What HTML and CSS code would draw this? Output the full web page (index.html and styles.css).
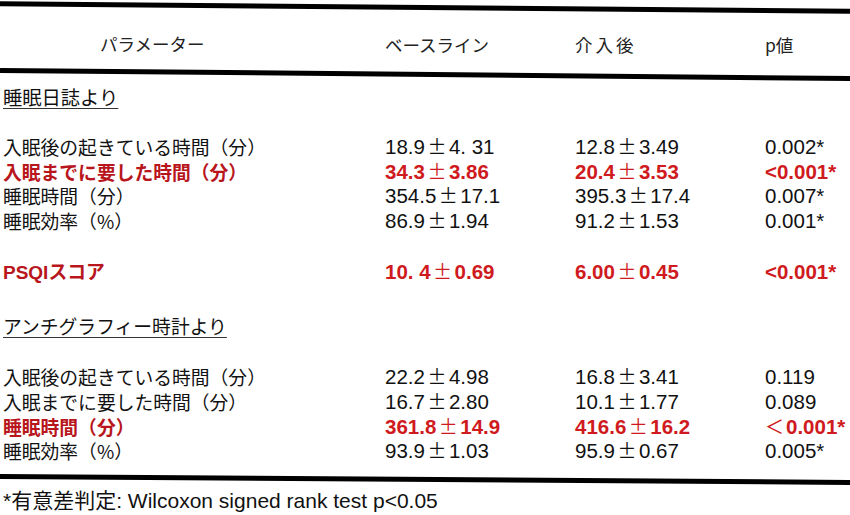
FILE: index.html
```html
<!DOCTYPE html>
<html lang="ja">
<head>
<meta charset="utf-8">
<title>睡眠パラメーター</title>
<link rel="stylesheet" href="styles.css">
</head>
<body>
<div class="sheet">
  <div class="rule rule-top"></div>
  <div class="row head">
    <div class="c1 head-param">パラメーター</div>
    <div>ベースライン</div>
    <div class="head-after">介入後</div>
    <div>p値</div>
  </div>
  <div class="rule rule-mid"></div>

  <div class="row section sec1"><div class="c1"><span class="ul">睡眠日誌より</span></div></div>

  <div class="group g1">
    <div class="row">
      <div class="c1">入眠後の起きている時間（分）</div>
      <div class="num">18.9<span class="pm">±</span>4. 31</div>
      <div class="num">12.8<span class="pm">±</span>3.49</div>
      <div class="num">0.002*</div>
    </div>
    <div class="row red">
      <div class="c1">入眠までに要した時間（分）</div>
      <div class="num">34.3<span class="pm">±</span>3.86</div>
      <div class="num">20.4<span class="pm">±</span>3.53</div>
      <div class="num">&lt;0.001*</div>
    </div>
    <div class="row">
      <div class="c1">睡眠時間（分）</div>
      <div class="num">354.5<span class="pm">±</span>17.1</div>
      <div class="num">395.3<span class="pm">±</span>17.4</div>
      <div class="num">0.007*</div>
    </div>
    <div class="row">
      <div class="c1">睡眠効率（%）</div>
      <div class="num">86.9<span class="pm">±</span>1.94</div>
      <div class="num">91.2<span class="pm">±</span>1.53</div>
      <div class="num">0.001*</div>
    </div>
  </div>

  <div class="row red psqi">
    <div class="c1"><span class="lat">PSQI</span>スコア</div>
    <div class="num">10. 4<span class="pm">±</span>0.69</div>
    <div class="num">6.00<span class="pm">±</span>0.45</div>
    <div class="num">&lt;0.001*</div>
  </div>

  <div class="row section sec2"><div class="c1"><span class="ul">アンチグラフィー時計より</span></div></div>

  <div class="group g2">
    <div class="row">
      <div class="c1">入眠後の起きている時間（分）</div>
      <div class="num">22.2<span class="pm">±</span>4.98</div>
      <div class="num">16.8<span class="pm">±</span>3.41</div>
      <div class="num">0.119</div>
    </div>
    <div class="row">
      <div class="c1">入眠までに要した時間（分）</div>
      <div class="num">16.7<span class="pm">±</span>2.80</div>
      <div class="num">10.1<span class="pm">±</span>1.77</div>
      <div class="num">0.089</div>
    </div>
    <div class="row red">
      <div class="c1">睡眠時間（分）</div>
      <div class="num">361.8<span class="pm">±</span>14.9</div>
      <div class="num">416.6<span class="pm">±</span>16.2</div>
      <div class="num"><span class="lt">＜</span>0.001*</div>
    </div>
    <div class="row">
      <div class="c1">睡眠効率（%）</div>
      <div class="num">93.9<span class="pm">±</span>1.03</div>
      <div class="num">95.9<span class="pm">±</span>0.67</div>
      <div class="num">0.005*</div>
    </div>
  </div>

  <div class="rule rule-bot"></div>
  <div class="foot">*有意差判定: Wilcoxon signed rank test p&lt;0.05</div>
</div>
</body>
</html>
```
FILE: styles.css
```css
* { box-sizing: border-box; }
html, body { margin: 0; padding: 0; background: #fff; }
body {
  width: 850px;
  height: 515px;
  overflow: hidden;
  font-family: "Liberation Sans", "Noto Sans CJK JP", sans-serif;
  color: #111;
}
.sheet { display: flex; flex-direction: column; }

.rule { height: 5px; background: #000; width: 852px; }
.rule-top { margin-top: 5px; transform: rotate(0.5deg); }
.rule-mid { transform: rotate(0.55deg); }
.rule-bot { margin-top: 13.7px; transform: rotate(0.4deg); }

.row {
  display: grid;
  grid-template-columns: 382px 190px 190px 1fr;
  height: 24.7px;
  align-items: center;
  padding-left: 3px;
  white-space: nowrap;
}
.c1 {
  font-family: "Noto Sans CJK JP", sans-serif;
  font-size: 18.8px;
  line-height: 22px;
}
.num {
  font-size: 20.5px;
  line-height: 22px;
}
.pm {
  display: inline-block;
  width: 24px;
  line-height: 1;
  text-align: center;
  font-family: "Noto Sans CJK JP", sans-serif;
  font-size: 19px;
  font-weight: 400;
}
.lt {
  font-family: "Noto Sans CJK JP", sans-serif;
  font-weight: 400;
  font-size: 19px;
  line-height: 1;
  margin-right: 2px;
}

.head {
  height: 62px;
  padding-top: 6px;
  font-family: "Noto Sans CJK JP", sans-serif;
  font-size: 17.5px;
  color: #222;
}
.head .c1 { font-size: 17.5px; }
.head-param { padding-left: 97px; }
.head-after { letter-spacing: 3px; }

.section .c1 { font-size: 19.3px; }
.sec2 .c1 { font-size: 18.8px; }
.ul {
  text-decoration: underline;
  text-decoration-thickness: 1px;
  text-underline-offset: 3px;
  text-decoration-color: #333;
}
.sec1 { margin-top: 8px; }
.g1 { margin-top: 25px; }
.psqi { margin-top: 26.5px; }
.sec2 { margin-top: 29.3px; }
.g2 { margin-top: 26.3px; }

.red { color: #cf1a20; font-weight: 700; }
.red .c1 { color: #b8161c; }
.lat { font-family: "Liberation Sans", sans-serif; font-weight: 700; font-size: 19px; }

.foot {
  margin-top: 6px;
  padding-left: 3px;
  height: 25px;
  line-height: 25px;
  font-size: 21px;
  font-family: "Liberation Sans", "Noto Sans CJK JP", sans-serif;
  white-space: nowrap;
}
```
